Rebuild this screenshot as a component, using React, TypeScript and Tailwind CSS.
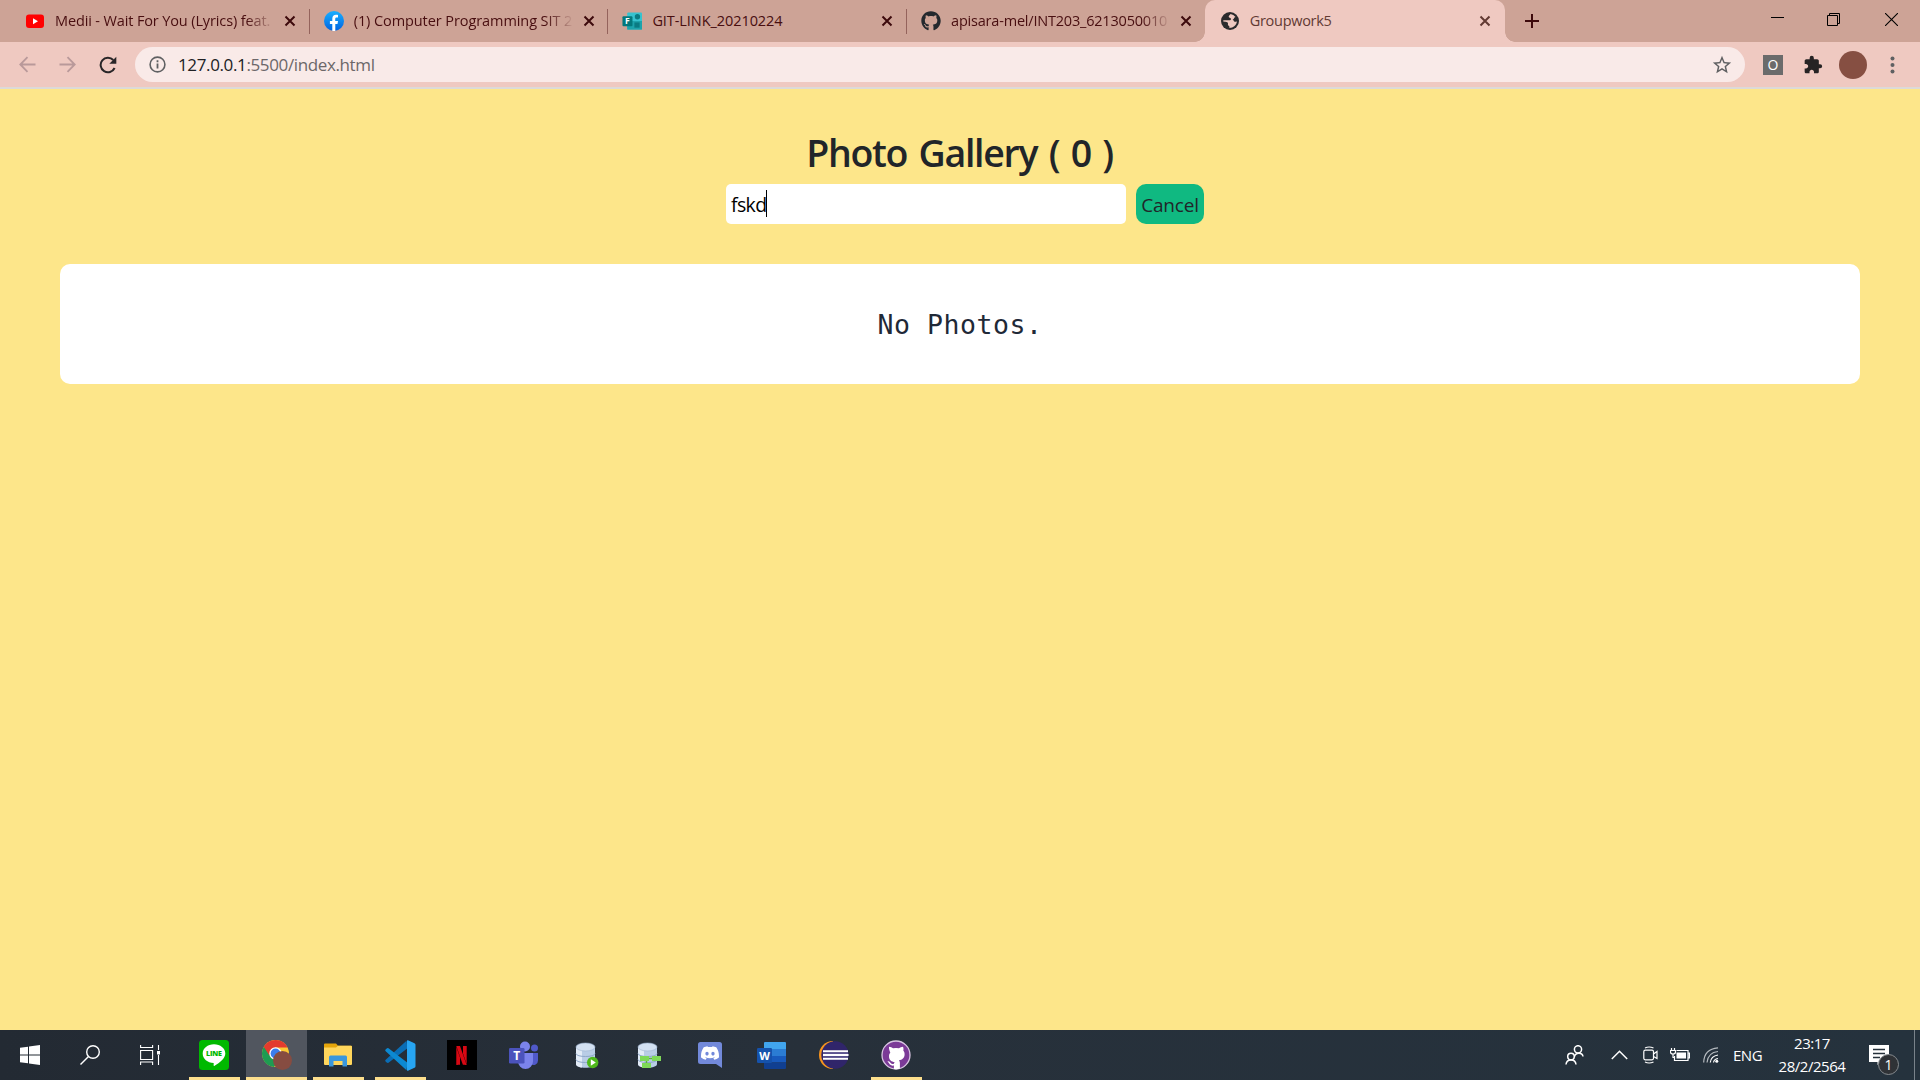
import type { ReactNode } from 'react';
import { FaGithub } from 'react-icons/fa';
import { SiNetflix, SiDiscord } from 'react-icons/si';
import { MdExtension, MdStarBorder } from 'react-icons/md';

/* ---------- favicons ---------- */

const YouTube = () => (
  <svg width="20" height="20" viewBox="0 0 20 20">
    <rect x="1" y="3.500" width="18" height="13.500" rx="3" fill="#ff0000" />
    <path d="M8 7.200v6l5-3z" fill="#fff" />
  </svg>
);

const Facebook = () => (
  <svg width="20" height="20" viewBox="0 0 20 20">
    <defs>
      <linearGradient id="fb" x1="0" y1="0" x2="0" y2="1">
        <stop offset="0" stopColor="#19afff" />
        <stop offset="1" stopColor="#0062e0" />
      </linearGradient>
    </defs>
    <circle cx="10" cy="10" r="10" fill="url(#fb)" />
    <path d="M8.300 19.900v-7H5.900V10h2.400V7.800c0-2.600 1.400-4 3.700-4 .9 0 2 .2 2 .2v2.400h-1.300c-1.200 0-1.500.7-1.500 1.500V10H14l-.5 2.900h-2.200v7a10 10 0 0 1-3 0z" fill="#fff" />
  </svg>
);

const Forms = () => (
  <svg width="21" height="20" viewBox="0 0 21 20">
    <rect x="5.500" y="1" width="15.500" height="18" rx="1" fill="#36c3cf" />
    <rect x="5.500" y="10" width="15.500" height="9" fill="#1da3ab" />
    <circle cx="16.200" cy="5.500" r="2.800" fill="#0a7b83" />
    <rect x="13" y="11.500" width="5.500" height="5.500" fill="#0a7b83" />
    <rect x="0.500" y="5" width="10.500" height="10.500" rx="1" fill="#03787c" />
    <text x="5.700" y="13.600" textAnchor="middle" fontFamily="Open Sans, sans-serif" fontWeight="700" fontSize="9" fill="#fff">F</text>
  </svg>
);

const Globe = () => (
  <svg width="20" height="20" viewBox="0 0 20 20">
    <circle cx="10" cy="10" r="9" fill="#2b2b2d" />
    <path d="M10.500 3c-.5 1.300-1.800 1.400-1.800 2.800 0 1.200 2.300.7 2.300 2.200 0 1-.7 1.300-1.700 1.300-2 0-3.500-.4-6.300.3.300 1 .8 1 1.600 1.100 1.200.2 2.600 0 3.200 1 .6.9-.3 1.500.4 2.500.4.700 1.200.6 1.200 1.500v1.300c4 0 7.200-3 7.500-6.500-.8-.3-1.200.5-2.200.3-1.200-.3-1-2-2.200-2.200 2-.4 1.200-2.300 3-2.600A7 7 0 0 0 10.500 3z" fill="#efc9c1" />
  </svg>
);

const Cross = ({ color }: { color: string }) => (
  <svg width="12" height="12" viewBox="0 0 12 12">
    <path d="M1.500 1.500l9 9M10.500 1.500l-9 9" stroke={color} strokeWidth="2" />
  </svg>
);

/* ---------- browser chrome ---------- */

type TabProps = { icon: ReactNode; title: string; active?: boolean; divider?: boolean; track: string; fade?: boolean };

const Tab = ({ icon, title, active, divider, track, fade }: TabProps) => (
  <div
    className={`relative flex h-[42px] shrink-0 items-center pl-[15px] ${
      active ? 'w-[300px] rounded-t-[10px] bg-[#efc9c1] text-[#623a33]' : 'w-[298.7px] text-[#480e10]'
    }`}
  >
    <span className="flex w-5 shrink-0 justify-center">{icon}</span>
    <span
      className={`ml-[10px] w-[220px] shrink-0 overflow-hidden whitespace-nowrap text-[14.500px] leading-[22px] ${track} ${
        fade ? '[mask-image:linear-gradient(to_right,#000_87%,transparent)]' : ''
      }`}
    >
      {title}
    </span>
    <span className="ml-[9px] flex w-3">
      <Cross color={active ? '#623a33' : '#3d0a0c'} />
    </span>
    {divider && <span className="absolute top-[9px] right-[-1px] h-[25px] w-px bg-[#94635c]" />}
    {active && (
      <>
        <span className="absolute bottom-0 left-[-10px] size-[10px] bg-[radial-gradient(circle_at_0_0,transparent_9.500px,#efc9c1_10px)]" />
        <span className="absolute right-[-10px] bottom-0 size-[10px] bg-[radial-gradient(circle_at_100%_0,transparent_9.500px,#efc9c1_10px)]" />
      </>
    )}
  </div>
);

const WindowButtons = () => (
  <div className="ml-auto flex h-[38px] items-center text-black">
    <span className="flex w-[56px] justify-center">
      <svg width="13" height="13" viewBox="0 0 13 13"><path d="M0 4.500h13" stroke="#000" /></svg>
    </span>
    <span className="flex w-[57px] justify-center">
      <svg width="13" height="13" viewBox="0 0 13 13" fill="none" stroke="#000">
        <path d="M.5 2.500h10v10H.5zM2.500 2.500v-2h10v10h-2" />
      </svg>
    </span>
    <span className="flex w-[58px] justify-center">
      <svg width="13" height="13" viewBox="0 0 13 13"><path d="M0 0l13 13M13 0L0 13" stroke="#000" strokeWidth="1.100" /></svg>
    </span>
  </div>
);

const TabStrip = () => (
  <div className="flex h-[42px] bg-[#cda396] pl-[10px]">
    <Tab icon={<YouTube />} title="Medii - Wait For You (Lyrics) feat. " divider fade track="tracking-[-0.130px]" />
    <Tab icon={<Facebook />} title="(1) Computer Programming SIT 2" divider fade track="tracking-[-0.080px]" />
    <Tab icon={<Forms />} title="GIT-LINK_20210224" divider track="tracking-[-0.070px]" />
    <Tab icon={<FaGithub size={20} color="#24292e" />} title="apisara-mel/INT203_6213050010" fade track="tracking-[-0.200px]" />
    <Tab icon={<Globe />} title="Groupwork5" active track="tracking-[-0.300px]" />
    <span className="ml-[19px] flex items-center">
      <svg width="16" height="16" viewBox="0 0 16 16"><path d="M8 1v14M1 8h14" stroke="#3d0a0c" strokeWidth="2" /></svg>
    </span>
    <WindowButtons />
  </div>
);

const Toolbar = () => (
  <div className="flex h-[47px] items-center border-b-2 border-[#dcdad8] bg-[#efc9c1]">
    <div className="flex w-[135px] shrink-0 items-center pl-[19px]">
      <svg width="17" height="17" viewBox="0 0 17 17" fill="none" stroke="#b9999a" strokeWidth="1.800">
        <path d="M16.500 8.500H1.500M8.500 1.200L1.300 8.500l7.200 7.300" />
      </svg>
      <svg className="ml-[23px]" width="17" height="17" viewBox="0 0 17 17" fill="none" stroke="#b9999a" strokeWidth="1.800">
        <path d="M.5 8.500h15M8.500 1.200l7.200 7.300-7.200 7.300" />
      </svg>
      <svg className="ml-[23px]" width="18" height="18" viewBox="0 0 18 18">
        <path d="M15.600 12a7.300 7.300 0 1 1-1.300-8" fill="none" stroke="#282527" strokeWidth="2" />
        <path d="M17.300.8v7h-7z" fill="#282527" />
      </svg>
    </div>
    <div className="flex h-[35px] w-[1610px] shrink-0 items-center rounded-full bg-[#f9eae8] pl-[14px] text-[17px] tracking-[-0.370px]">
      <svg width="17" height="17" viewBox="0 0 17 17">
        <circle cx="8.500" cy="8.500" r="7.400" fill="none" stroke="#5f6062" strokeWidth="1.600" />
        <path d="M8.500 7.500v5M8.500 4.300v1.900" stroke="#5f6062" strokeWidth="1.800" />
      </svg>
      <span className="ml-[12px] leading-[24px] text-[#6c6769]">
        <span className="text-[#202124]">127.0.0.1</span>:5500/index.html
      </span>
      <MdStarBorder className="mr-[12px] ml-auto" size={22} color="#5f6062" />
    </div>
    <div className="flex items-center">
      <span className="ml-[18px] flex size-5 items-center justify-center bg-[#6b6b6b] text-[14px] text-white">O</span>
      <MdExtension className="ml-[20px]" size={20} color="#262324" />
      <span className="ml-[16px] size-7 rounded-full bg-[#864f42]" />
      <svg className="ml-[23px]" width="5" height="18" viewBox="0 0 5 18" fill="#5f6062">
        <circle cx="2.500" cy="2.500" r="2" /><circle cx="2.500" cy="9" r="2" /><circle cx="2.500" cy="15.500" r="2" />
      </svg>
    </div>
  </div>
);

/* ---------- page ---------- */

const Page = () => (
  <main className="flex flex-1 flex-col items-center bg-[#fde68a] px-[60px] pt-[39px] text-[#212529]">
    <h1 className="h-14 pr-px text-[37.500px] leading-[49px] font-semibold tracking-[-1.300px] whitespace-nowrap [word-spacing:3px]">Photo Gallery ( 0 )</h1>
    <div className="ml-[10px] flex text-[20px]">
      <div className="flex h-10 w-[400px] items-center rounded-[5px] bg-white pl-[5px] text-black">
        <span className="pt-[2px] text-[19.500px] leading-none tracking-[-0.650px]">fskd</span>
        <span className="-mt-px h-[27px] w-px bg-black" />
      </div>
      <button className="ml-[10px] h-10 w-[68px] rounded-[10px] bg-[#10b981] pt-[2px] text-center text-[19px] leading-none tracking-[-0.200px]">Cancel</button>
    </div>
    <section className="mt-10 flex h-[120px] w-full items-center justify-center rounded-[10px] bg-white">
      <p className="pt-[2px] font-['DejaVu_Sans_Mono',monospace] text-[26.500px] leading-none tracking-[0.550px] text-[#1f2937]">No Photos.</p>
    </section>
  </main>
);

/* ---------- taskbar icons ---------- */

const WindowsLogo = () => (
  <svg width="20" height="20" viewBox="0 0 20 20" fill="#fff">
    <path d="M0 2.800l8-1.100v7.800H0zM9 1.500L20 0v9.500H9zM0 10.500h8v7.800l-8-1.100zM9 10.500h11V20L9 18.500z" />
  </svg>
);

const Search = () => (
  <svg width="20" height="20" viewBox="0 0 20 20" fill="none" stroke="#fff" strokeWidth="1.400">
    <circle cx="13" cy="7" r="6.300" /><path d="M8.500 11.500L.5 19.500" />
  </svg>
);

const TaskView = () => (
  <svg width="20" height="20" viewBox="0 0 20 20" fill="none" stroke="#fff" strokeWidth="1.100">
    <path d="M.6 0v2.500h12V0M.6 5.500h12v9H.6zM.6 20v-3h12v3M18.500 0v5M18.500 10v10" />
    <rect x="17" y="6" width="3" height="3.500" fill="#fff" stroke="none" />
  </svg>
);

const LineApp = () => (
  <svg width="30" height="30" viewBox="0 0 30 30">
    <rect width="30" height="30" rx="3.500" fill="#00b900" />
    <path d="M15 4.300c6.300 0 11.300 4 11.300 9.200 0 4.800-5.500 9-10.700 12.300-1.200.6-1-.4-.9-2.800C8.500 22.700 3.700 19 3.700 13.500 3.700 8.300 8.700 4.300 15 4.300z" fill="#fff" />
    <text x="15" y="16.300" textAnchor="middle" fontFamily="Open Sans, sans-serif" fontWeight="800" fontSize="7.200" textLength="16" fill="#00b900">LINE</text>
  </svg>
);

const Chrome = () => (
  <svg width="31" height="32" viewBox="0 0 31 32">
    <circle cx="14.500" cy="14.500" r="13.500" fill="#fcc934" />
    <path d="M14.500 14.500L2.800 7.750A13.500 13.500 0 0 0 13 28l5-8z" fill="#1e9c52" />
    <path d="M14.500 14.500L8 16 2.800 7.750A13.500 13.500 0 0 1 26.700 8.500H14.500z" fill="#e33b2e" />
    <circle cx="14.500" cy="14.500" r="6.200" fill="#fff" />
    <circle cx="14.500" cy="14.500" r="4.900" fill="#3b7ded" />
    <circle cx="21.500" cy="21.500" r="9.500" fill="#864c41" />
  </svg>
);

const Explorer = () => (
  <svg width="28" height="24" viewBox="0 0 28 24">
    <path d="M0 1.500Q0 .5 1 .5h11l2 2.200h13q1 0 1 1V10H0z" fill="#e5a50a" />
    <path d="M0 4.500h12l2-1.800h13q1 0 1 1V21q0 1-1 1H1q-1 0-1-1z" fill="#ffd65c" />
    <path d="M5 23.500V14q0-1.500 1.500-1.500h15q1.500 0 1.500 1.500v9.500h-4.500V18h-9v5.500z" fill="#3a97dc" />
  </svg>
);

const VSCode = () => (
  <svg width="31" height="31" viewBox="0 0 31 31">
    <path d="M22.500 8.200L3.500 22.800q-1 .6-1.800-.2L.6 21.500q-.8-.9.1-1.700L21.500.8z" fill="#0a6db5" />
    <path d="M22.500 22.800L3.500 8.200q-1-.6-1.800.2L.6 9.500q-.8.900.1 1.700l20.800 19z" fill="#0c89d2" />
    <path d="M22 .4q.8-.4 1.500 0l6 2.800q1 .5 1 1.600v21.400q0 1.100-1 1.600l-6 2.800q-.8.400-1.500 0z" fill="#27a5f2" />
  </svg>
);

const Netflix = () => (
  <span className="flex size-[30px] items-center justify-center bg-black">
    <SiNetflix size={19} color="#d80813" />
  </span>
);

const Teams = () => (
  <svg width="30" height="28" viewBox="0 0 30 28">
    <circle cx="16" cy="5.500" r="5" fill="#7b83eb" />
    <circle cx="25.500" cy="7" r="3.500" fill="#5059c9" />
    <path d="M22 12h7v7.500a4.500 4.500 0 0 1-7 3.800z" fill="#5059c9" />
    <path d="M9 12h15v8.500a7.500 7.500 0 0 1-15 0z" fill="#7b83eb" />
    <rect y="7" width="15.500" height="15.500" rx="1.300" fill="#4b53bc" />
    <text x="7.700" y="19.300" textAnchor="middle" fontFamily="Open Sans, sans-serif" fontWeight="700" fontSize="12" fill="#fff">T</text>
  </svg>
);

const Cylinder = () => (
  <>
    <path d="M1 5v17c0 5 19 5 19 0V5z" fill="#b9cde6" />
    <path d="M1 5v17c0 2 3 3.300 6 3.600V6z" fill="#e3ecf7" />
    <path d="M1 11.500c0 4 19 4 19 0M1 17.500c0 4 19 4 19 0" fill="none" stroke="#8fa8c9" />
    <ellipse cx="10.500" cy="5" rx="9.500" ry="4" fill="#d3e1f2" stroke="#9fb5d2" strokeWidth=".6" />
  </>
);

const DbRun = () => (
  <svg width="24" height="27" viewBox="0 0 24 27">
    <Cylinder />
    <circle cx="17.700" cy="20.500" r="5.700" fill="#4fb81c" />
    <path d="M15.800 17.300v6.400l5-3.200z" fill="#fff" />
  </svg>
);

const DbModel = () => (
  <svg width="24" height="27" viewBox="0 0 24 27">
    <Cylinder />
    <path d="M3 14h9v5H3zM15 14h9v5h-9zM5 21h9v5H5z" fill="#7ed957" />
    <path d="M12 16.500h3M9.500 19v2" stroke="#5cb338" strokeWidth="1.500" />
  </svg>
);

const Discord = () => (
  <span className="relative flex h-[26px] w-6 items-start justify-center">
    <svg className="absolute inset-0" width="24" height="26" viewBox="0 0 24 26">
      <path d="M2.500 0h19Q24 0 24 2.500V26l-6-4H2.500Q0 22 0 19.500v-17Q0 0 2.500 0z" fill="#7289da" />
    </svg>
    <SiDiscord className="relative mt-[2px]" size={18} color="#fff" />
  </span>
);

const Word = () => (
  <svg width="29" height="27" viewBox="0 0 29 27">
    <path d="M7 1q0-1 1-1h20q1 0 1 1v6H7z" fill="#41a5ee" />
    <path d="M7 7h22v7H7z" fill="#2b7cd3" />
    <path d="M7 14h22v6.500H7z" fill="#185abd" />
    <path d="M7 20.500h22V26q0 1-1 1H8q-1 0-1-1z" fill="#103f91" />
    <rect y="6" width="15" height="15" rx="1.300" fill="#1552ac" />
    <text x="7.500" y="17.600" textAnchor="middle" fontFamily="Open Sans, sans-serif" fontWeight="700" fontSize="11" fill="#fff">W</text>
  </svg>
);

const Eclipse = () => (
  <svg width="30" height="28" viewBox="0 0 30 28">
    <path d="M14 0A14 14 0 0 0 14 28z" fill="#f7941e" />
    <circle cx="16" cy="14" r="13.700" fill="#30256a" />
    <path d="M4 10.300h25M4 14h25.500M4 17.700h25" stroke="#fff" strokeWidth="1.900" />
    <path d="M4 12.200h25M4 15.900h25" stroke="#6f69a3" strokeWidth="1" />
  </svg>
);

const GitHubDesktop = () => (
  <svg width="30" height="30" viewBox="0 0 30 30">
    <circle cx="15" cy="15" r="14" fill="#7b3a97" stroke="#d9c6e2" strokeWidth="1.300" />
    <path d="M8 6.800c1.500 0 3 .8 4 1.500q3-.7 6 0c1-.7 2.500-1.500 4-1.500.6 1.500.6 2.700.3 3.700 1 1.200 1.300 2.300 1.300 3.700 0 4-2.500 5.500-5.700 6 .6.7 1 1.500 1 2.800v5.500q-2 1-6 .5v-3.500c-3 .6-4.200-.8-5-2.400-.4-.9-1-1.400-1.400-1.700 1.500-.6 2.500.6 3.200 1.600.8 1.100 1.800 1.300 3.200.8.100-.8.400-1.300.8-1.700-3.200-.4-5.700-1.900-5.700-5.900 0-1.400.4-2.500 1.300-3.700-.8-1.500-1.500-3.500-1.300-5.700z" fill="#fff" />
  </svg>
);

type AppProps = { children: ReactNode; open?: boolean; active?: boolean; wide?: boolean };

const TaskButton = ({ children, open, active, wide }: AppProps) => (
  <div
    className={`relative flex h-[50px] w-[61px] shrink-0 items-center justify-center ${wide ? '' : 'pr-[2px]'} ${
      active ? 'bg-[#51565f]' : ''
    }`}
  >
    {children}
    {open && <span className={`absolute bottom-0 h-[3px] bg-[#fddf8d] ${active ? 'left-0 w-full' : 'left-[5px] w-[51px]'}`} />}
  </div>
);

const Tray = () => (
  <div className="ml-auto flex h-full items-center text-[15px] text-white">
    <svg className="mr-[27px]" width="19" height="20" viewBox="0 0 19 20" fill="none" stroke="#fff" strokeWidth="1.500">
      <circle cx="13" cy="4.300" r="3.600" /><path d="M9.500 11.500c1-4.500 8-4.500 8.500 0" />
      <circle cx="6" cy="11.500" r="3.300" /><path d="M1 19.500c.5-6 9.500-6 10 0" />
    </svg>
    <svg className="mr-[15px]" width="17" height="10" viewBox="0 0 17 10" fill="none" stroke="#fff" strokeWidth="1.500"><path d="M.8 9l7.700-7.700L16.200 9" /></svg>
    <svg className="mr-[12px]" width="15" height="18" viewBox="0 0 15 18" fill="none" stroke="#fff" strokeWidth="1.200">
      <rect x=".8" y="4.200" width="9.700" height="9.600" rx="1.500" /><path d="M10.500 8l3.500-2.500v7L10.500 10.500M2 2Q6 0 10.500 2M2 16Q6 18 10.500 16" />
    </svg>
    <svg className="mr-[13px]" width="20" height="14" viewBox="0 0 20 14" fill="none" stroke="#fff" strokeWidth="1.200">
      <path d="M6.500 2.500h11.500v10H4.500V8M18 5h1.400v5h-1.400" /><rect x="6.500" y="4.500" width="9.500" height="6" fill="#fff" stroke="none" />
      <path d="M1.500 0v2M4.500 0v2M.5 2.500h5v1.500q0 2-2.500 2t-2.500-2zM3 6v3.500h1.500" />
    </svg>
    <svg className="mr-[14px]" width="16" height="16" viewBox="0 0 16 16" fill="none" strokeWidth="1.200">
      <path d="M.7 15.500Q1 2 15 .8M4 15.500Q5 5.500 15 4.500" stroke="#b6bbc0" /><path d="M7.300 15.500Q8 9 15 8M10.500 15.500Q11 12 15 11.500" stroke="#fff" />
      <circle cx="13.800" cy="14.300" r="1.500" fill="#fff" />
    </svg>
    <span className="mr-[15px] w-[29px] tracking-[-0.500px]">ENG</span>
    <div className="w-[70px] text-center text-[15px] leading-[23px] tracking-[-0.450px] whitespace-nowrap">
      <div>23:17</div>
      <div>28/2/2564</div>
    </div>
    <div className="relative ml-[22px] h-[20px] w-[45px]">
      <svg width="20" height="20" viewBox="0 0 20 20"><path d="M0 0h20v17h-8l-3.500 3v-3H0z" fill="#fff" /><path d="M4 4.500h12M4 8.500h12M4 12.500h7" stroke="#26313b" strokeWidth="1.300" /></svg>
      <span className="absolute top-[9px] left-[9px] flex size-[21px] items-center justify-center rounded-full border border-[#858a8e] bg-[#2f3236] text-[14px] leading-none">1</span>
    </div>
    <span className="mr-[5px] h-full w-px bg-[#79828a]" />
  </div>
);

const Taskbar = () => (
  <div className="flex h-[50px] bg-[linear-gradient(90deg,#232a33,#27303a_40%,#25323d)]">
    <div className="flex w-[184px] shrink-0 items-center">
      <span className="flex w-[60px] justify-center"><WindowsLogo /></span>
      <span className="flex w-[60px] justify-center"><Search /></span>
      <span className="flex w-[60px] justify-center"><TaskView /></span>
    </div>
    <div className="flex gap-px">
      <TaskButton open><LineApp /></TaskButton>
      <TaskButton open active wide><Chrome /></TaskButton>
      <TaskButton open><Explorer /></TaskButton>
      <TaskButton open wide><VSCode /></TaskButton>
      <TaskButton><Netflix /></TaskButton>
      <TaskButton><Teams /></TaskButton>
      <TaskButton wide><DbRun /></TaskButton>
      <TaskButton wide><DbModel /></TaskButton>
      <TaskButton><Discord /></TaskButton>
      <TaskButton><Word /></TaskButton>
      <TaskButton><Eclipse /></TaskButton>
      <TaskButton open><GitHubDesktop /></TaskButton>
    </div>
    <Tray />
  </div>
);

export default function App() {
  return (
    <div className="flex h-[1080px] w-[1920px] flex-col overflow-hidden font-['Open_Sans','Noto_Sans',sans-serif]">
      <TabStrip />
      <Toolbar />
      <Page />
      <Taskbar />
    </div>
  );
}
